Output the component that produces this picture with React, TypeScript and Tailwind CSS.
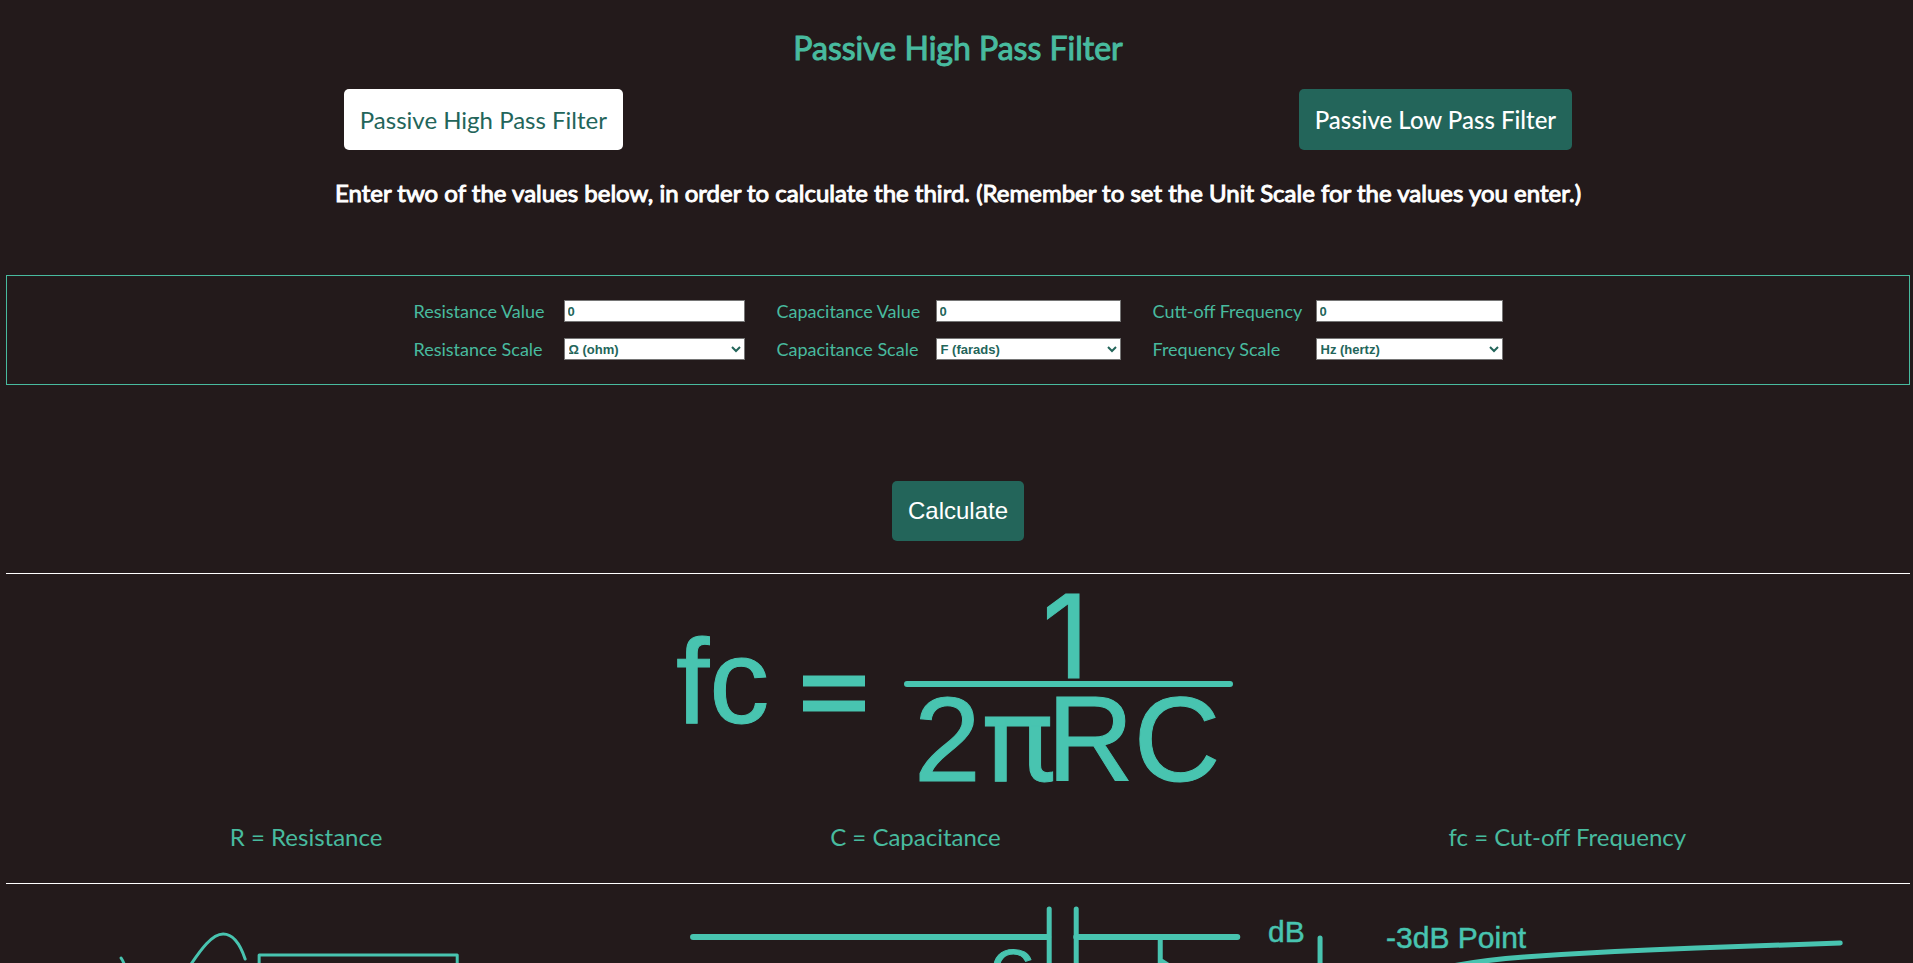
import { useState } from "react";

type Field = {
  id: string;
  valueLabel: string;
  scaleLabel: string;
  units: string[];
  columns: string;
};

const fields: Field[] = [
  {
    id: "resistance",
    valueLabel: "Resistance Value",
    scaleLabel: "Resistance Scale",
    units: ["Ω (ohm)", "kΩ (kiloohm)", "MΩ (megaohm)"],
    columns: "grid-cols-[150px_181px]",
  },
  {
    id: "capacitance",
    valueLabel: "Capacitance Value",
    scaleLabel: "Capacitance Scale",
    units: ["F (farads)", "μF (microfarads)", "nF (nanofarads)", "pF (picofarads)"],
    columns: "grid-cols-[159px_185px]",
  },
  {
    id: "frequency",
    valueLabel: "Cutt-off Frequency",
    scaleLabel: "Frequency Scale",
    units: ["Hz (hertz)", "kHz (kilohertz)", "MHz (megahertz)"],
    columns: "grid-cols-[163px_187px]",
  },
];

const control =
  "h-[22px] w-full border border-[#767676] bg-white font-['Liberation_Sans',Arial,sans-serif] text-[13px] font-bold text-[#23655a]";

function FieldGroup({ field }: { field: Field }) {
  const [value, setValue] = useState("0");
  return (
    <div className={`grid content-start items-center gap-y-4 ${field.columns}`}>
      <label htmlFor={`${field.id}-value`} className="text-[18px] leading-[22px]">
        {field.valueLabel}
      </label>
      <input
        id={`${field.id}-value`}
        value={value}
        onChange={(e) => setValue(e.target.value)}
        className={`${control} px-[3px]`}
      />
      <label htmlFor={`${field.id}-scale`} className="text-[18px] leading-[22px]">
        {field.scaleLabel}
      </label>
      <select id={`${field.id}-scale`} className={control}>
        {field.units.map((u) => (
          <option key={u}>{u}</option>
        ))}
      </select>
    </div>
  );
}

function Formula() {
  return (
    <svg
      viewBox="0 0 570 210"
      className="mx-auto block h-[210px] w-[570px] overflow-visible font-['Liberation_Sans',Arial,sans-serif] text-[120px]"
      fill="#48c4b0"
      stroke="#48c4b0"
      strokeWidth="1"
      role="img"
      aria-label="fc = 1 / 2πRC"
    >
      <text x="3" y="143">fc</text>
      <path d="M130 101H192M130 126H192" strokeWidth="11" />
      <text x="369" y="98" className="font-['Inter',sans-serif] text-[116px]">1</text>
      <path d="M234 104H557" strokeWidth="6" strokeLinecap="round" />
      <text x="241" y="201">2</text>
      <text x="310" y="201" className="font-['Roboto',sans-serif] text-[120px]">π</text>
      <text x="374" y="201">RC</text>
    </svg>
  );
}

function Drawings() {
  const drawing = "block w-full font-['Liberation_Sans',Arial,sans-serif]";
  return (
    <div className="grid grid-cols-[634fr_616fr_653fr]">
      <svg viewBox="0 0 634 79" className={drawing} fill="none" stroke="#48c4b0" strokeWidth="3" strokeLinecap="round">
        <path d="M115 74C117 77 118 79 119 83" />
        <path d="M183 83C195 65 206 50 217 50C228 50 235 63 239 75" />
        <path d="M253 100V71H451V100" strokeLinejoin="round" />
      </svg>
      <svg viewBox="0 0 616 79" className={drawing} fill="none" stroke="#48c4b0" strokeWidth="5" strokeLinecap="round">
        <path d="M53 53H408M436 53H597" strokeWidth="6" />
        <path d="M409 25V100M436 25V100" />
        <path d="M520 53V100" />
        <path d="M522 77L530 82" strokeWidth="4" />
        <text x="350" y="107" fontSize="60" fill="#48c4b0" strokeWidth="1">C</text>
      </svg>
      <svg viewBox="0 0 653 79" className={drawing} fill="none" stroke="#48c4b0" strokeWidth="5" strokeLinecap="round">
        <path d="M63 54V100" />
        <path d="M190 83C215 78 240 75 267 73C310 70 380 66 439 64L583 59" />
        <text x="11" y="58" fontSize="30" fill="#48c4b0" strokeWidth="0.5">dB</text>
        <text x="129" y="64" fontSize="30" fill="#48c4b0" strokeWidth="0.5">-3dB Point</text>
      </svg>
    </div>
  );
}

export default function App() {
  return (
    <main className="min-h-screen bg-[#231a1b] pr-[3px] pl-1.5 pt-7 font-['Lato',sans-serif] text-[#48bb9f]">
      <h1 className="text-center text-[32px] leading-[40px] [-webkit-text-stroke:1px]">Passive High Pass Filter</h1>

      <nav className="mt-[21px] flex justify-around text-[24px] leading-[29px]">
        <button className="rounded-[5px] bg-white p-4 text-[#23655a]">Passive High Pass Filter</button>
        <button className="rounded-[5px] bg-[#23655a] p-4 font-medium text-white">Passive Low Pass Filter</button>
      </nav>

      <p className="mt-7 text-center text-[24px] leading-[30px] text-white [-webkit-text-stroke:1px]">
        Enter two of the values below, in order to calculate the third. (Remember to set the Unit Scale for the values
        you enter.)
      </p>

      <form onSubmit={(e) => e.preventDefault()}>
        <div className="mt-[67px] flex h-[110px] justify-center gap-8 border border-[#48bb9f] pt-6">
          {fields.map((f) => (
            <FieldGroup key={f.id} field={f} />
          ))}
        </div>
        <div className="mt-24 flex justify-center">
          <button
            type="submit"
            className="rounded-[5px] bg-[#23655a] p-4 font-['Liberation_Sans',Arial,sans-serif] text-[24px] leading-[28px] text-white"
          >
            Calculate
          </button>
        </div>
      </form>

      <hr className="mt-8 border-white" />
      <div className="mt-1.5">
        <Formula />
      </div>

      <div className="mt-8 flex justify-around text-[24px] leading-[29px]">
        <p>R = Resistance</p>
        <p>C = Capacitance</p>
        <p>fc = Cut-off Frequency</p>
      </div>

      <hr className="mt-8 border-white" />
      <Drawings />
    </main>
  );
}
